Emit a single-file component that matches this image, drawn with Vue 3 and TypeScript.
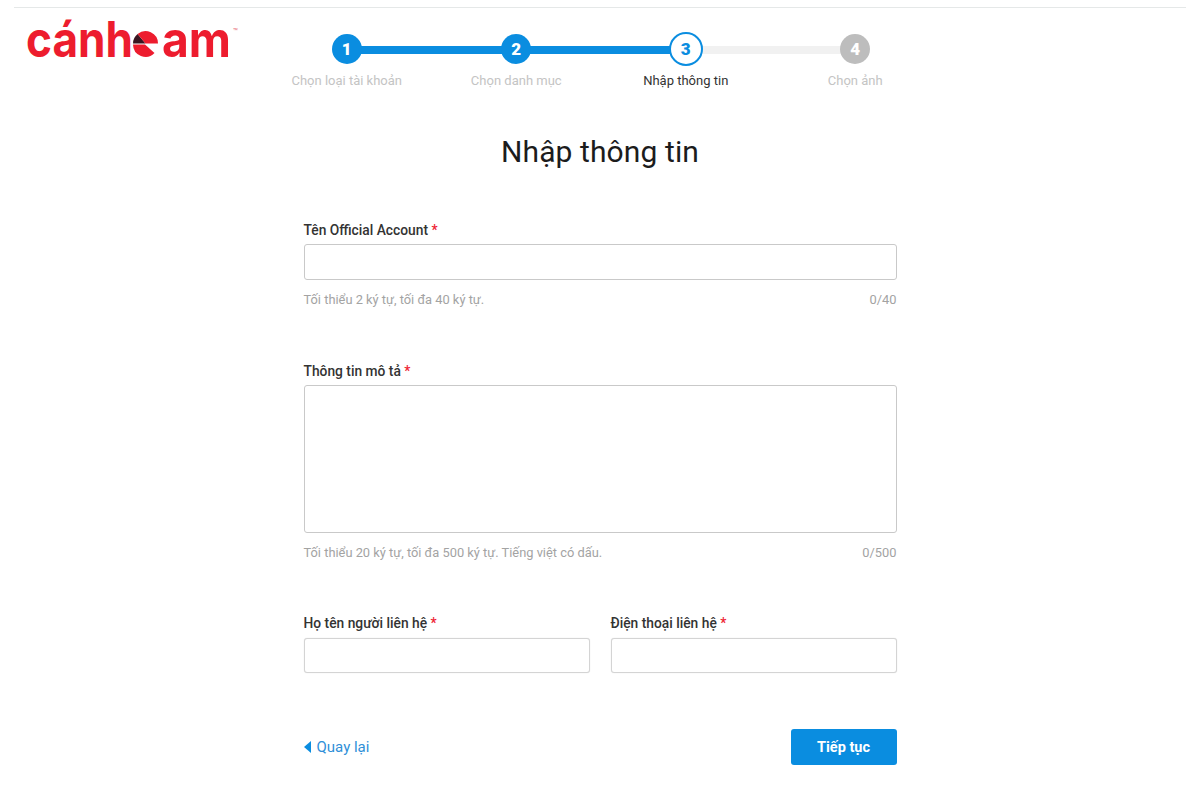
<script setup lang="ts">
interface Step { n: number; label: string; state: 'done' | 'active' | 'todo' }
const steps: Step[] = [
  { n: 1, label: 'Chọn loại tài khoản', state: 'done' },
  { n: 2, label: 'Chọn danh mục', state: 'done' },
  { n: 3, label: 'Nhập thông tin', state: 'active' },
  { n: 4, label: 'Chọn ảnh', state: 'todo' },
]
</script>

<template>
  <div class="page">
    <header class="top">
      <svg class="logo" width="218" height="64" viewBox="0 0 218 64" role="img" aria-label="cánheam">
        <g transform="translate(0 8)">
          <text x="0" y="41" class="logo-text" textLength="107" lengthAdjust="spacingAndGlyphs">cánh</text>
          <path d="M119.5 27.5 L107 27.5 A12.5 12.5 0 0 1 111.6 18 Z" fill="#3a1622" />
          <path d="M119.5 27.5 L111.6 18 A12.5 12.5 0 0 1 132 27.5 Z" fill="#ed1c2e" />
          <path d="M107 28.5 L119 28.5 L128.5 37 A12.5 12.5 0 0 1 107 28.5 Z" fill="#ed1c2e" />
          <text x="136" y="41" class="logo-text" textLength="69" lengthAdjust="spacingAndGlyphs">am</text>
          <text x="207" y="18" class="logo-tm">™</text>
        </g>
      </svg>
      <ol class="steps">
        <li v-for="s in steps" :key="s.n" class="step" :class="s.state">
          <span class="dot">{{ s.n }}</span>
          <span class="step-label">{{ s.label }}</span>
        </li>
      </ol>
    </header>

    <main class="form">
      <h1>Nhập thông tin</h1>

      <section class="field first">
        <label>Tên Official Account <em>*</em></label>
        <input class="box" type="text" />
        <div class="hint"><span>Tối thiểu 2 ký tự, tối đa 40 ký tự.</span><span>0/40</span></div>
      </section>

      <section class="field second">
        <label>Thông tin mô tả <em>*</em></label>
        <textarea class="box area"></textarea>
        <div class="hint"><span>Tối thiểu 20 ký tự, tối đa 500 ký tự. Tiếng việt có dấu.</span><span>0/500</span></div>
      </section>

      <section class="pair">
        <div class="field">
          <label>Họ tên người liên hệ <em>*</em></label>
          <input class="box small" type="text" />
        </div>
        <div class="field">
          <label>Điện thoại liên hệ <em>*</em></label>
          <input class="box small" type="text" />
        </div>
      </section>

      <footer class="actions">
        <a class="back"><i class="caret"></i>Quay lại</a>
        <button class="next" type="button">Tiếp tục</button>
      </footer>
    </main>
  </div>
</template>

<style>
html, body { background: #fff; }
</style>

<style scoped>
.page {
  width: 1200px;
  height: 800px;
  box-sizing: border-box;
  padding-top: 7px;
  overflow: hidden;
  font-family: Roboto, "Liberation Sans", sans-serif;
  color: #222;
}
.top {
  position: relative;
  margin: 0 14px;
  height: 96px;
  border-top: 1px solid #e5e8e8;
}
.logo {
  position: absolute;
  left: 12px;
  top: 0;
}
.logo-text {
  font-family: Inter, sans-serif;
  font-weight: 700;
  font-size: 50px;
  fill: #ed1c2e;
}
.logo-tm {
  font-family: Roboto, sans-serif;
  font-size: 8px;
  fill: #e8707a;
}
.steps {
  position: absolute;
  left: 248px;
  top: 26px;
  display: flex;
  width: 678px;
  margin: 0;
  padding: 0;
  list-style: none;
}
.step {
  position: relative;
  flex: 1;
  display: flex;
  flex-direction: column;
  align-items: center;
}
.step + .step::before {
  content: "";
  position: absolute;
  left: -50%;
  width: 100%;
  top: 12px;
  height: 8px;
  background: #0a8de0;
}
.step.todo::before { background: #f1f1f1; }
.dot {
  position: relative;
  z-index: 1;
  width: 30px;
  height: 30px;
  box-sizing: border-box;
  border-radius: 50%;
  display: flex;
  align-items: center;
  justify-content: center;
  font-weight: 900;
  font-size: 17px;
  color: #fff;
  background: #0a8de0;
}
.active .dot {
  background: #fff;
  border: 2px solid #0a8de0;
  color: #0a8de0;
  width: 34px;
  height: 34px;
  margin: -2px 0;
}
.todo .dot { background: #bdbdbd; }
.step-label {
  margin-top: 9px;
  font-size: 13px;
  line-height: 16px;
  color: #c4c4c4;
  white-space: nowrap;
}
.active .step-label { color: #333; }

.form {
  width: 593px;
  margin: 0 auto;
}
h1 {
  margin: 28px 0 0;
  font-weight: 400;
  font-size: 30px;
  line-height: 40px;
  letter-spacing: 0.1px;
  text-align: center;
  color: #1c1c1c;
}
.field { display: flex; flex-direction: column; }
.first { margin-top: 50px; }
.second { margin-top: 55px; }
label {
  font-size: 13.8px;
  font-weight: 500;
  line-height: 16px;
  color: #333;
}
label em {
  font-style: normal;
  color: #ee2233;
}
.box {
  display: block;
  box-sizing: border-box;
  width: 100%;
  height: 36px;
  margin: 6px 0 0;
  border: 1px solid #c9c9c9;
  border-radius: 3px;
  background: #fff;
  outline: none;
  resize: none;
}
.area { height: 148px; }
.small {
  height: 35px;
  margin-top: 7px;
  border-color: #d4d4d4;
  box-shadow: 0 0 1px #d8d8d8;
}
.hint {
  display: flex;
  justify-content: space-between;
  margin-top: 12px;
  font-size: 12.85px;
  line-height: 16px;
  color: #a3a3a3;
}
.pair {
  display: grid;
  grid-template-columns: 286px 286px;
  column-gap: 21px;
  margin-top: 54px;
}
.actions {
  display: flex;
  justify-content: space-between;
  align-items: center;
  margin-top: 56px;
}
.back {
  display: flex;
  align-items: center;
  font-size: 15px;
  line-height: 20px;
  color: #2f8fd8;
}
.caret {
  width: 0;
  height: 0;
  margin-right: 6px;
  border-top: 6px solid transparent;
  border-bottom: 6px solid transparent;
  border-right: 7px solid #0a8de0;
}
.next {
  width: 106px;
  height: 36px;
  border: 0;
  border-radius: 3px;
  background: #0a8de0;
  color: #fff;
  font-family: inherit;
  font-size: 14.5px;
  font-weight: 700;
}
</style>
